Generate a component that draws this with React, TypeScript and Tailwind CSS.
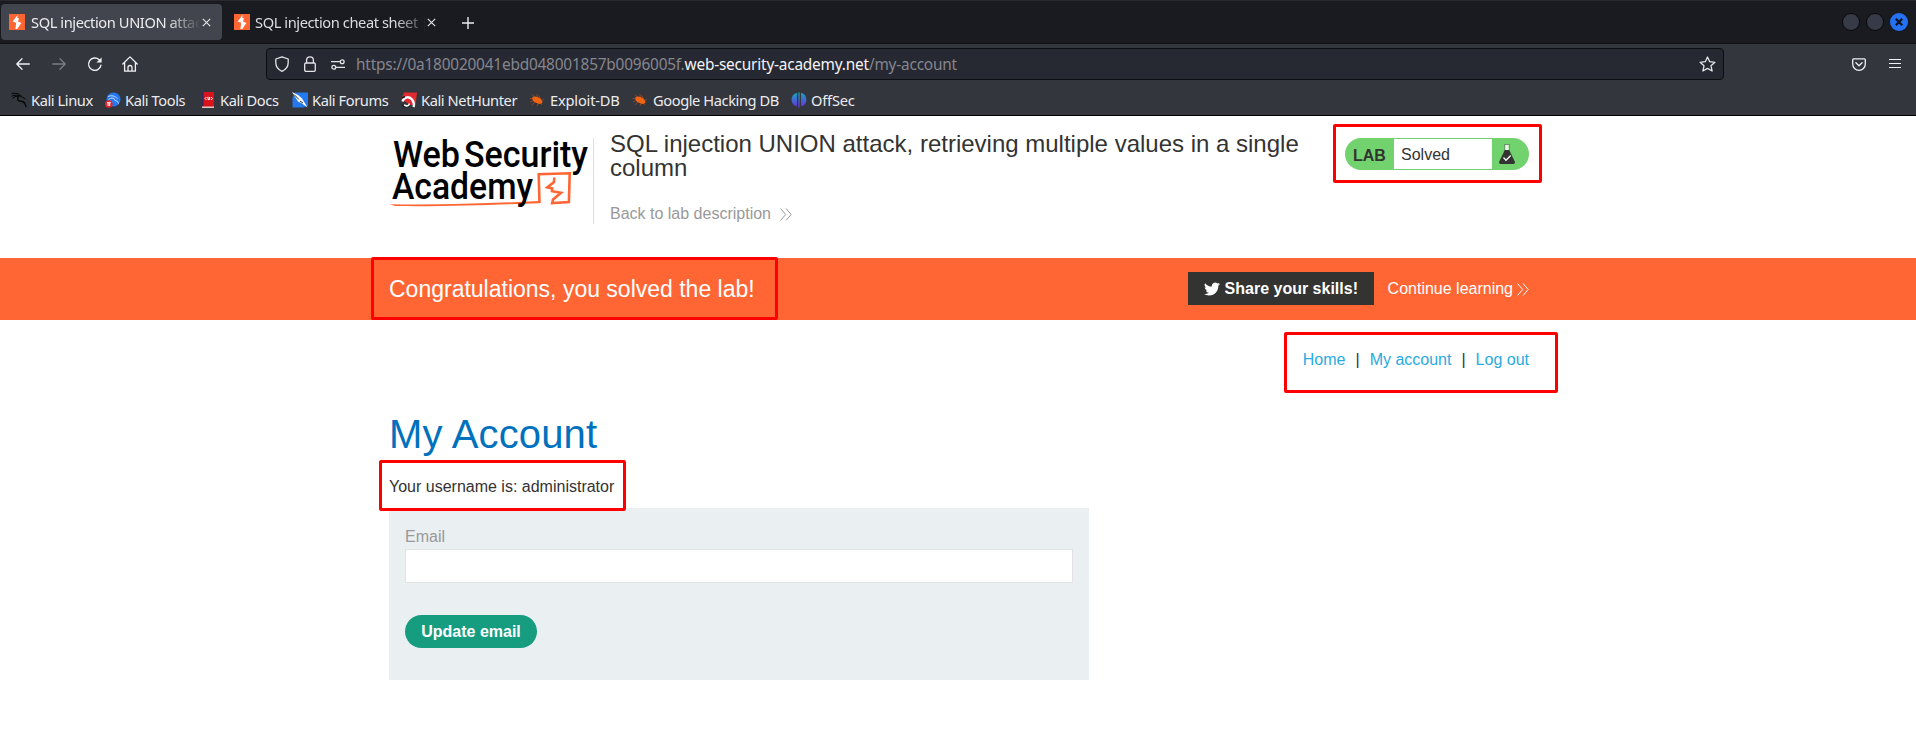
import React from "react";

function Favicon() {
  return (
    <svg width="16" height="16" viewBox="0 0 16 16" className="shrink-0">
      <rect width="16" height="16" fill="#ff6633" />
      <path d="M8.600 1 3.600 7.400l3.600 1.300L6.400 15h1.800l4.200-6-3.400-1.600L10 4.600 8.400 4z" fill="#fff" />
    </svg>
  );
}

function CloseIcon() {
  return (
    <svg width="9" height="9" viewBox="0 0 9 9" className="shrink-0">
      <path d="M.8.8l7.400 7.400M8.200.8L.8 8.200" stroke="#e6e6ea" strokeWidth="1.1" />
    </svg>
  );
}

function TabBar() {
  return (
    <div className="flex h-[44px] items-start border-t border-b border-t-[#27292e] border-b-[#0e0f12] bg-[#1a1b20] pl-px pt-[3px]">
      <div className="flex h-9 w-[221px] items-center rounded bg-[#42454d] pl-2">
        <Favicon />
        <span className="ml-[6px] w-[169px] overflow-hidden whitespace-nowrap text-[#ececf0] [mask-image:linear-gradient(to_right,black_136px,transparent_170px)]">
          SQL injection UNION attack
        </span>
        <span className="ml-0.5"><CloseIcon /></span>
      </div>
      <div className="ml-1 flex h-9 w-[221px] items-center rounded pl-2">
        <Favicon />
        <span className="ml-[5px] w-[170px] overflow-hidden whitespace-nowrap text-[#dcdce0] [mask-image:linear-gradient(to_right,black_140px,transparent_175px)]">
          SQL injection cheat sheet | Web
        </span>
        <span className="ml-0.5"><CloseIcon /></span>
      </div>
      <svg width="12" height="12" viewBox="0 0 12 12" className="ml-[15px] mt-[13px]">
        <path d="M6 0v12M0 6h12" stroke="#ececf0" strokeWidth="1.4" />
      </svg>
      <div className="ml-auto mr-2 mt-[9px] flex gap-[6px]">
        <span className="h-[18px] w-[18px] rounded-full border border-[#08090b] bg-[#373b47]" />
        <span className="h-[18px] w-[18px] rounded-full border border-[#08090b] bg-[#373b47]" />
        <span className="flex h-[18px] w-[18px] items-center justify-center rounded-full bg-[#2471f5]">
          <svg width="8" height="8" viewBox="0 0 8 8">
            <path d="M.8.8l6.400 6.400M7.200.8L.8 7.200" stroke="#111319" strokeWidth="2.2" />
          </svg>
        </span>
      </div>
    </div>
  );
}

function NavBar() {
  return (
    <div className="flex h-10 items-center pl-4">
      <svg width="14" height="12" viewBox="0 0 14 12" fill="none" stroke="#f0f0f4" strokeWidth="1.3" strokeLinecap="round" strokeLinejoin="round">
        <path d="M13.300 6H.8M6 .8.8 6 6 11.200" />
      </svg>
      <svg className="ml-[22px]" width="14" height="12" viewBox="0 0 14 12" fill="none" stroke="#7b7d83" strokeWidth="1.3" strokeLinecap="round" strokeLinejoin="round">
        <path d="M.7 6h12.500M8 .8 13.200 6 8 11.200" />
      </svg>
      <svg className="ml-[21px]" width="16" height="16" viewBox="0 0 16 16" fill="none" stroke="#f0f0f4" strokeWidth="1.4" strokeLinecap="round">
        <path d="M13.900 9.300A6.200 6.200 0 1 1 12 3.600l1 1" />
        <path d="M14.600 1.400v5.200H9.400z" fill="#f0f0f4" stroke="none" />
      </svg>
      <svg className="ml-[19px]" width="16" height="16" viewBox="0 0 16 16" fill="none" stroke="#f0f0f4" strokeWidth="1.3" strokeLinejoin="round" strokeLinecap="round">
        <path d="M.8 8 8 .9 15.200 8M2.600 6.600v8.600h10.800V6.600M6 15v-3.500a2 2 0 0 1 4 0V15" />
      </svg>
      <div className="ml-[128px] flex h-8 w-[1458px] items-center rounded border border-[#0d0e13] bg-[#272932] pl-2 pr-[7px]">
        <svg width="14" height="16" viewBox="0 0 14 16" fill="none" stroke="#e4e4e8" strokeWidth="1.3" strokeLinejoin="round">
          <path d="M7 .8 13.200 3v3.600c0 4-2.600 7.300-6.200 8.700C3.400 13.900.8 10.600.8 6.600V3z" />
        </svg>
        <svg className="ml-[15px]" width="12" height="16" viewBox="0 0 12 16" fill="none" stroke="#e4e4e8" strokeWidth="1.3">
          <rect x=".7" y="7" width="10.6" height="8.3" rx="1.3" />
          <path d="M2.600 7V4.200a3.400 3.400 0 0 1 6.800 0V7" />
        </svg>
        <svg className="ml-[15px]" width="14" height="11" viewBox="0 0 14 11" fill="none" stroke="#e4e4e8" strokeWidth="1.3">
          <path d="M0 2.700h9M5 8.300h9" />
          <circle cx="11.2" cy="2.7" r="1.9" />
          <circle cx="2.8" cy="8.3" r="1.9" />
        </svg>
        <span className="ml-[11px] whitespace-nowrap pt-[2px] text-[15.4px] tracking-[-0.2px] text-[#85868e]">
          https://0a180020041ebd048001857b0096005f.<span className="text-[#f4f4f8]">web-security-academy.net</span>/my-account
        </span>
        <svg className="ml-auto" width="17" height="16" viewBox="0 0 17 16" fill="none" stroke="#e4e4e8" strokeWidth="1.3" strokeLinejoin="round">
          <path d="m8.500 1 2.200 4.700 5.200.6-3.900 3.500 1.100 5.200-4.600-2.600L3.900 15 5 9.800 1.100 6.300l5.200-.6z" />
        </svg>
      </div>
      <svg className="ml-[128px]" width="14" height="13" viewBox="0 0 14 13" fill="none" stroke="#f0f0f4" strokeWidth="1.3" strokeLinecap="round" strokeLinejoin="round">
        <path d="M1.600.8h10.800q.9 0 .9.900v4.400a6.300 6.200 0 0 1-12.600 0V1.700q0-.9.900-.9zM3.900 4.700 7 7.700l3.100-3" />
      </svg>
      <svg className="ml-[23px] mb-px" width="12" height="11" viewBox="0 0 12 11">
        <path d="M0 1.500h12M0 5.500h12M0 9.500h12" stroke="#f0f0f4" strokeWidth="1.2" />
      </svg>
    </div>
  );
}

function DragonIcon() {
  return (
    <svg width="16" height="16" viewBox="0 0 16 16" fill="none" stroke="#050506">
      <path d="M.5 1.500C5 .8 8 1.500 10.500 4M.5 4.300C4 2.500 7 3 10 4.500L14.500 7M1.500 6.500C4 4 6 4 8 4.500" strokeWidth="1" />
      <path d="M7.500 4.500C5.500 7.500 7 9 10 9.300c3 .3 4.500 2 5 5.700" strokeWidth="1.4" />
    </svg>
  );
}

function ToolsIcon() {
  return (
    <svg width="16" height="16" viewBox="0 0 16 16" fill="none">
      <circle cx="8.5" cy="7.5" r="7" fill="#2777ef" />
      <path d="M3 4.500c4-1.500 7-.5 9.500 2.200M3.500 7.500c3-2 4.500-1.500 5.500-1 0 3 4 1.500 4.500 5" stroke="#c9e0ff" strokeWidth="1" />
      <circle cx="3.8" cy="12" r="3.8" fill="#e3252b" />
      <path d="M2 10.700h3.800M3.100 10.700v3.300M4.700 10.700v3.300" stroke="#fff" />
    </svg>
  );
}

function DocsIcon() {
  return (
    <svg width="12" height="16" viewBox="0 0 12 16" fill="none">
      <rect width="12" height="16" fill="#d9131b" />
      <path d="M0 0h1.500v14H0z" fill="#30285c" />
      <path d="M0 14.500h12V16H0z" fill="#d8cccc" />
      <path d="M4.500 5 3 6.500 4.500 8M6 4.800v2.700h1.600V5M9 5l1.500 1.500L9 8" stroke="#fff" strokeWidth="1" />
    </svg>
  );
}

function ForumsIcon() {
  return (
    <svg width="16" height="16" viewBox="0 0 16 16">
      <path d="M3 .5h13V14l-5 1.500H.5V6z" fill="#2479ee" />
      <path d="M0 0l6 3 4 3.500 2.500 4 3 5-5.500-4L6 9.500z" fill="#fff" />
      <path d="M2 2.500 7 7.500M8 9l3 2" stroke="#1d2530" fill="none" />
    </svg>
  );
}

function NetHunterIcon() {
  return (
    <svg width="16" height="16" viewBox="0 0 16 16" fill="none">
      <path d="M3 .5h13L14.500 13H9L.5 7z" fill="#e4292f" />
      <path d="M1.500 9.500C3 4.500 8.500 4 11 7.500s2.500 5 1.500 7.500" stroke="#fff" strokeWidth="2.4" />
      <path d="M1 13c2 2 5 2 8 1M1 6l3-1.500" stroke="#15161a" strokeWidth="1.5" />
      <path d="M3 13c3 1.500 5.500 1 5-1.500" stroke="#fff" strokeWidth="1.6" />
    </svg>
  );
}

function BugIcon() {
  return (
    <svg width="16" height="14" viewBox="0 0 16 14">
      <path d="M.5 5.500 4 6M3 1.500l3 3M7.500 1 9 4M10 2.500l2 4M15 6 12 8M1 9l4-1.500M3 12 6 9M8 13l1.500-3M13 12l-2-3" stroke="#9c4a22" strokeWidth=".8" />
      <ellipse cx="8.3" cy="7.2" rx="5.6" ry="3" transform="rotate(28 8.3 7.2)" fill="#ef6311" />
    </svg>
  );
}

function OffSecIcon() {
  return (
    <svg width="16" height="16" viewBox="0 0 16 16" fill="none">
      <defs>
        <linearGradient id="offsec" x1="0" y1="0" x2="0" y2="16" gradientUnits="userSpaceOnUse">
          <stop offset="0" stopColor="#18a8b8" />
          <stop offset="1" stopColor="#6a2be0" />
        </linearGradient>
      </defs>
      <path d="M6 .8C2.500 1.600.6 4.500.6 7.800c0 3 1.700 5.600 4.600 6.700L6 13zM10 .8c3.500.8 5.400 3.700 5.400 7 0 3-1.700 5.600-4.600 6.700L10 13zM7.300.5h1.400v15H7.300z" fill="url(#offsec)" />
    </svg>
  );
}

function Bookmark({ icon, label, className }: { icon: React.ReactNode; label: string; className: string }) {
  return (
    <div className={"flex shrink-0 items-center whitespace-nowrap " + className}>
      {icon}
      <span>{label}</span>
    </div>
  );
}

function Bookmarks() {
  return (
    <div className="flex h-[31px] items-center pl-[11px] text-[#ececf0] [&_svg]:shrink-0">
      <Bookmark className="w-[94px] gap-1" icon={<DragonIcon />} label="Kali Linux" />
      <Bookmark className="w-[97px] gap-1" icon={<ToolsIcon />} label="Kali Tools" />
      <Bookmark className="w-[90px] gap-[6px]" icon={<DocsIcon />} label="Kali Docs" />
      <Bookmark className="w-[109px] gap-1" icon={<ForumsIcon />} label="Kali Forums" />
      <Bookmark className="w-[128px] gap-1" icon={<NetHunterIcon />} label="Kali NetHunter" />
      <Bookmark className="w-[103px] gap-[5px] tracking-[-0.2px]" icon={<BugIcon />} label="Exploit-DB" />
      <Bookmark className="w-[159px] gap-[5px]" icon={<BugIcon />} label="Google Hacking DB" />
      <Bookmark className="w-[80px] gap-1 tracking-[-0.2px]" icon={<OffSecIcon />} label="OffSec" />
    </div>
  );
}

function AcademyLogo() {
  return (
    <svg width="200" height="74" viewBox="0 0 200 74" className="shrink-0 overflow-visible">
      <path d="M1 66.200c50 .8 100-.8 149-3.200l.5 2.300C110 66.300 60 68.800 6 68z" fill="#ff6633" />
      <path d="M150.500 65 149.700 36.300l31-1-.8 28.700-16.700 1 .8-3.500 8-6.800-9-1.500.3-2.700-5-1.200 6.700-5.300.3-4.500" fill="none" stroke="#ff6633" strokeWidth="2.6" />
      <g fontFamily="Roboto, sans-serif" fontWeight="500" fontSize="37.5" fill="#000">
        <text x="4" y="28.800" textLength="67" lengthAdjust="spacingAndGlyphs">Web</text>
        <text x="75" y="28.800" textLength="124" lengthAdjust="spacingAndGlyphs">Security</text>
        <text x="3" y="61" textLength="141" lengthAdjust="spacingAndGlyphs">Academy</text>
      </g>
    </svg>
  );
}

function DoubleChevron() {
  return (
    <svg width="12" height="13" viewBox="0 0 12 13" fill="none" stroke="currentColor" strokeWidth="1" className="shrink-0">
      <path d="M.5.500l5.200 6-5.200 6M6 .500l5.200 6-5.200 6" />
    </svg>
  );
}

function Highlight({ className }: { className: string }) {
  return <div className={"pointer-events-none absolute rounded-[2px] border-[3px] border-[#ff0000] " + className} />;
}

function LabStatus() {
  return (
    <div className="relative ml-auto flex h-8 w-[184px] rounded-full bg-[#72d36e] py-px">
      <span className="w-[49px] pl-2 leading-[33px] font-bold">LAB</span>
      <span className="w-[98px] bg-white pl-[7px] leading-[31px]">Solved</span>
      <svg width="16" height="20" viewBox="0 0 16 20" className="ml-[7px] mt-[5px]">
        <path d="M5 .7h6M5.800 1v5.500L5 8M10.200 1v5.500" stroke="#6b8a68" fill="none" />
        <path d="M6.300 1h3.400v5H6.300z" fill="#eef8ed" />
        <path d="M5.800 6h4.400L16 18q0 2-1.500 2h-13Q0 20 0 18z" fill="#333332" />
        <path d="m4.500 13.500 2.500 2.700 4.700-4.700" stroke="#fff" strokeWidth="1.3" fill="none" />
      </svg>
      <Highlight className="-left-3 -top-[14px] h-[59px] w-[209px]" />
    </div>
  );
}

export default function App() {
  return (
    <div className="h-[753px] w-[1916px] overflow-hidden bg-white font-['Liberation_Sans',Arial,sans-serif] text-base text-[#333332]">
      <div className="h-[116px] border-b border-black bg-[#33363d] font-['Noto_Sans',sans-serif] text-[14.67px] tracking-[-0.42px]">
        <TabBar />
        <NavBar />
        <Bookmarks />
      </div>

      <header className="ml-[389px] flex h-[142px] w-[1140px] items-start pt-[22px]">
        <AcademyLogo />
        <div className="ml-[4px] h-[86px] border-l border-[#dfdfdf]" />
        <div className="ml-4 w-[700px]">
          <h2 className="-mt-[6px] text-2xl leading-6">
            SQL injection UNION attack, retrieving multiple values in a single column
          </h2>
          <div className="mt-[22px] flex items-center gap-[9px] leading-6 text-[#999]">
            <span>Back to lab description</span>
            <DoubleChevron />
          </div>
        </div>
        <LabStatus />
      </header>

      <div className="h-[62px] bg-[#ff6633] text-white">
        <div className="relative ml-[389px] flex h-full w-[1140px] items-center">
          <h4 className="text-[23px]">Congratulations, you solved the lab!</h4>
          <div className="mb-px ml-auto flex h-[33px] w-[186px] items-center bg-[#333332] pl-4 font-bold">
            <svg width="16" height="14" viewBox="0 2 24 20" fill="#fff" className="mr-[5px] shrink-0">
              <path d="M24 4.600a10 10 0 0 1-2.800.8 5 5 0 0 0 2.200-2.700c-1 .6-2 1-3.100 1.200a4.900 4.900 0 0 0-8.400 4.500A14 14 0 0 1 1.700 3.200a4.900 4.900 0 0 0 1.500 6.600c-.8 0-1.600-.2-2.200-.6v.1a5 5 0 0 0 3.900 4.800 5 5 0 0 1-2.200.1 5 5 0 0 0 4.600 3.400A10 10 0 0 1 0 19.500a14 14 0 0 0 7.500 2.200c9.100 0 14-7.500 14-14v-.6A10 10 0 0 0 24 4.600z" />
            </svg>
            <span>Share your skills!</span>
          </div>
          <div className="ml-[14px] flex items-center gap-[4px]">
            <span>Continue learning</span>
            <DoubleChevron />
          </div>
          <Highlight className="-left-[18px] -top-px h-[63px] w-[407px]" />
        </div>
      </div>

      <main className="ml-[389px] w-[1140px]">
        <nav className="relative flex h-[79px] items-center justify-end gap-[10px] text-[#29abe2]">
          <a>Home</a>
          <span className="text-[#333332]">|</span>
          <a>My account</a>
          <span className="text-[#333332]">|</span>
          <a>Log out</a>
          <Highlight className="-right-[29px] top-3 h-[61px] w-[274px]" />
        </nav>
        <h1 className="mt-[11px] text-[40px] leading-[48px] tracking-[0.15px] text-[#0071bc]">My Account</h1>
        <div className="relative mt-[18px] h-8 leading-[22px]">
          Your username is: administrator
          <Highlight className="-left-[10px] -top-4 z-10 h-[51px] w-[247px]" />
        </div>
        <form className="h-[172px] w-[700px] bg-[#eaeff2] px-4 pt-[17px]">
          <label className="block h-6 leading-6 text-[#999]">Email</label>
          <input className="block h-[34px] w-full border border-[#e3e3e3] bg-white px-2" />
          <button type="button" className="mt-8 block h-[33px] w-[132px] rounded-full bg-[#169c7f] text-center font-bold text-white">
            Update email
          </button>
        </form>
      </main>
    </div>
  );
}
